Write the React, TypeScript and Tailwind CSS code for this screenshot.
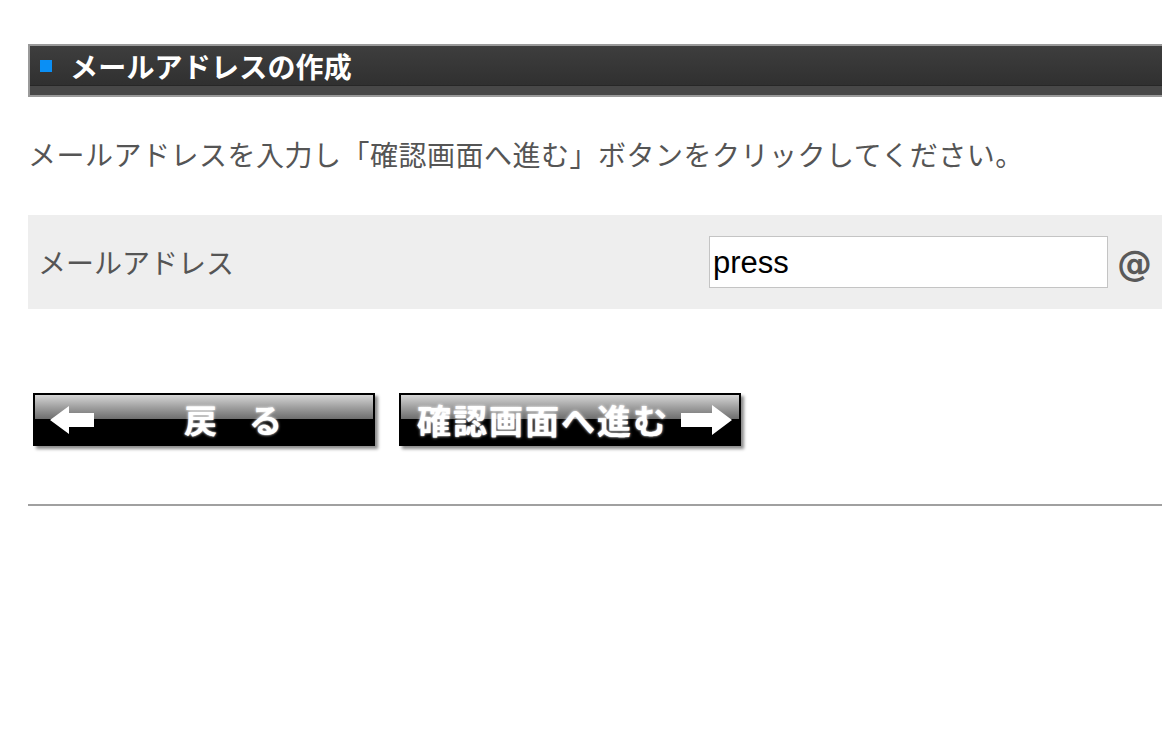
import React from 'react';

const jp = { fontFamily: '"Noto Sans CJK JP", "Noto Sans", sans-serif' };
const latin = { fontFamily: '"Liberation Sans", Arial, sans-serif' };

function ArrowLeft() {
  return (
    <svg width="46" height="30" viewBox="0 0 46 30" className="shrink-0">
      <filter id="soft-l"><feGaussianBlur stdDeviation="0.6" /></filter>
      <polygon
        points="0,15 19,1 19,8 44,8 44,22 19,22 19,29"
        fill="#fff"
        filter="url(#soft-l)"
      />
    </svg>
  );
}

function ArrowRight() {
  return (
    <svg width="54" height="32" viewBox="0 0 54 32" className="shrink-0">
      <filter id="soft-r"><feGaussianBlur stdDeviation="0.6" /></filter>
      <polygon
        points="53,16 33,1 33,9 2,9 2,23 33,23 33,31"
        fill="#fff"
        filter="url(#soft-r)"
      />
    </svg>
  );
}

// Glossy image-style button: grey gloss on top, black lower half
function GlossButton({ children }: { children: React.ReactNode }) {
  return (
    <div className="relative w-[342px] h-[53px] shrink-0 border-2 border-black shadow-[3px_3px_3px_rgba(0,0,0,0.45)] overflow-hidden">
      <div className="absolute inset-x-0 top-0 h-[24px] bg-gradient-to-b from-[#d6d6d6] to-[#6e6e6e]" />
      <div className="absolute inset-x-0 bottom-0 h-[25px] bg-black" />
      <div className="relative flex h-full items-center whitespace-nowrap">{children}</div>
    </div>
  );
}

export default function App() {
  return (
    <div className="w-[1162px] h-[740px] overflow-hidden bg-white" style={jp}>
      <div className="w-[1220px] pl-[28px]">
        {/* Section header */}
        <div className="mt-[44px] h-[53px] border-2 border-[#9a9a9a] bg-[#2f2f2f] flex flex-col">
          <div className="flex flex-1 items-center bg-gradient-to-b from-[#3e3e3e] to-[#303030] pl-[10px] border-b border-[#272727]">
            <span className="w-[12px] h-[12px] bg-[#0a8ff5] mt-[1px] shrink-0" />
            <h1 className="ml-[18px] text-[28px] font-bold text-white leading-none tracking-[0.2px]">
              メールアドレスの作成
            </h1>
          </div>
          <div className="h-[9px] bg-[#484848]" />
        </div>

        {/* Instruction */}
        <p className="mt-[37px] text-[28px] leading-[40px] text-[#555] tracking-[0.5px]">
          メールアドレスを入力し「確認画面へ進む」ボタンをクリックしてください。
        </p>

        {/* Form row */}
        <div className="mt-[41px] h-[94px] bg-[#eeeeee] flex items-center">
          <div className="w-[681px] shrink-0 pl-[10px] text-[28px] text-[#555]">
            メールアドレス
          </div>
          <div className="w-[399px] h-[52px] shrink-0 bg-white border border-[#c4c4c4] flex items-center pl-[3px] pt-[3px]">
            <span className="text-[31px] text-black" style={latin}>
              press
            </span>
          </div>
          <span
            className="ml-[9px] mt-[4px] text-[35px] font-bold text-[#5a5a5a] leading-none"
            style={{ fontFamily: '"DejaVu Sans", sans-serif' }}
          >
            @
          </span>
        </div>

        {/* Buttons */}
        <div className="mt-[84px] flex gap-[24px] pl-[5px]">
          <GlossButton>
            <div className="ml-[15px]"><ArrowLeft /></div>
            <span className="ml-[88px] text-[33px] font-bold text-white [text-shadow:0_0_3px_#fff,0_0_1px_#ccc] leading-none">
              戻
            </span>
            <span className="ml-[32px] text-[33px] font-bold text-white [text-shadow:0_0_3px_#fff,0_0_1px_#ccc] leading-none">
              る
            </span>
          </GlossButton>
          <GlossButton>
            <span className="ml-[16px] shrink-0 text-[34px] font-bold text-white tracking-[2px] [text-shadow:0_0_3px_#fff,0_0_1px_#ccc] leading-none">
              確認画面へ進む
            </span>
            <div className="ml-[10px]"><ArrowRight /></div>
          </GlossButton>
        </div>

        {/* Divider */}
        <div className="mt-[58px] h-[2px] bg-[#a0a0a0]" />
      </div>
    </div>
  );
}
